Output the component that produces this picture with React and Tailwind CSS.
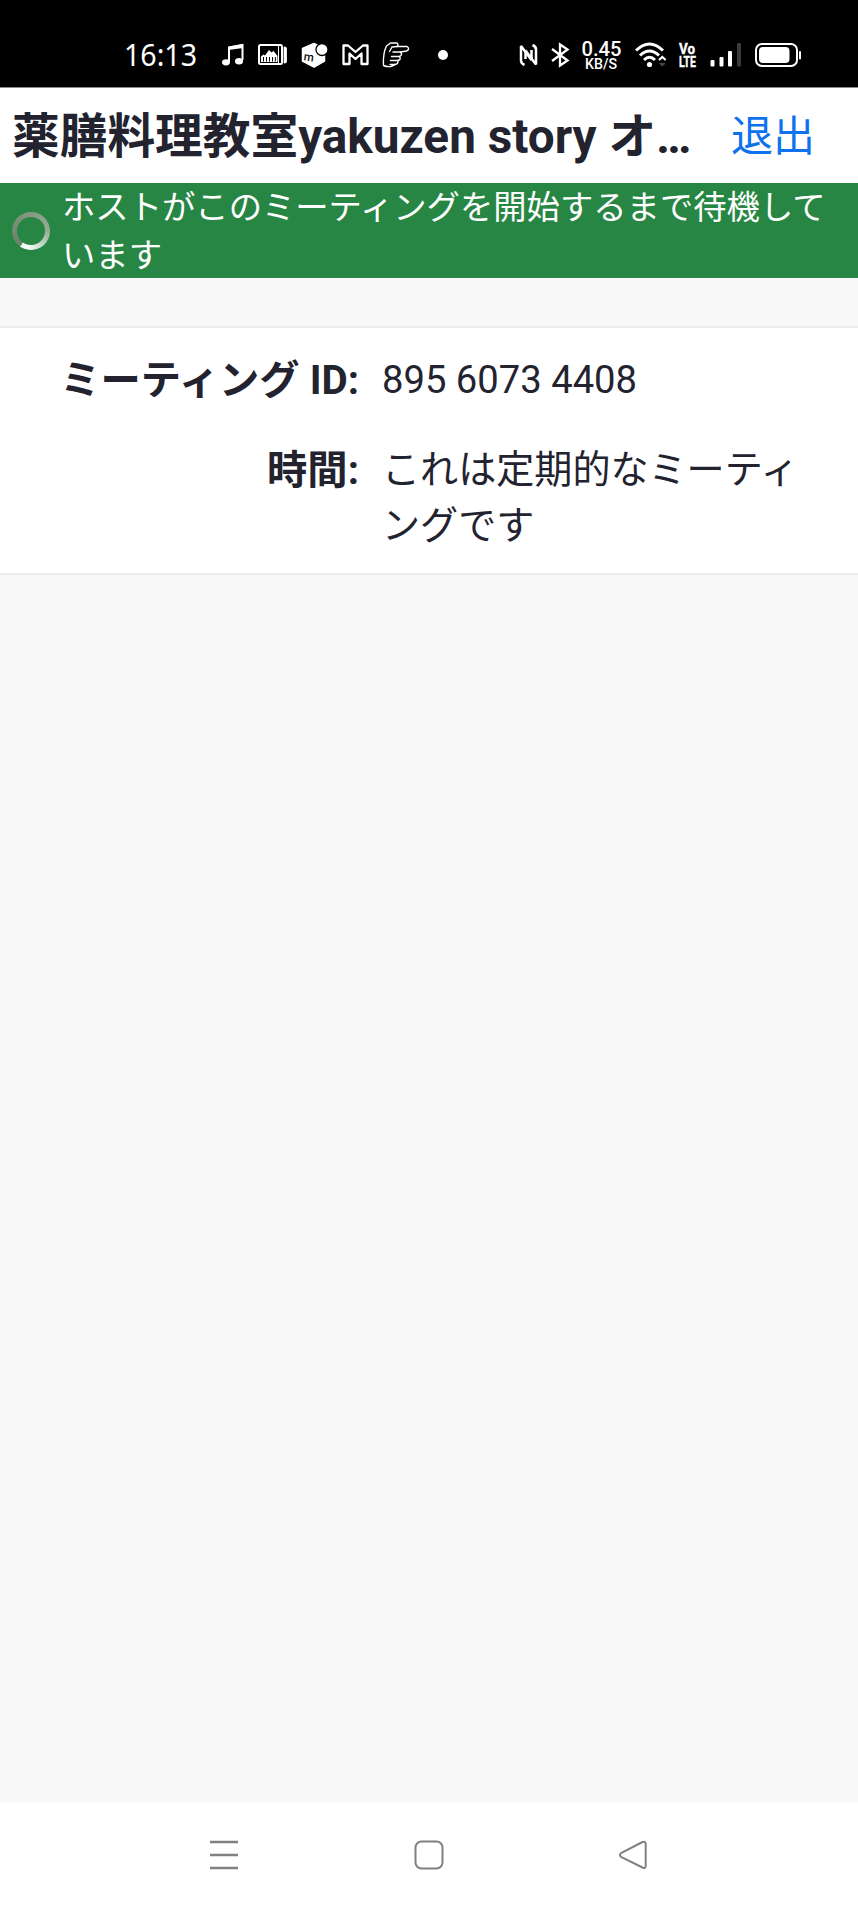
import React from "react";

function MusicIcon() {
  return (
    <svg className="ml-[24px] h-7 w-[23px]" viewBox="0 0 23 28">
      <path d="M8 20.5V6.5L21.5 4V19" fill="none" stroke="#fff" strokeWidth="2" />
      <path d="M7.5 5.5L22 3v4L7.5 9z" fill="#fff" />
      <ellipse cx="5" cy="21.3" rx="4" ry="3.1" fill="#fff" />
      <ellipse cx="18" cy="20.3" rx="4" ry="3.3" fill="#fff" />
    </svg>
  );
}

function GalleryIcon() {
  return (
    <svg className="ml-[14px] h-7 w-[30px]" viewBox="0 0 30 28" fill="none" stroke="#fff">
      <rect x="1" y="4" width="23" height="19" rx="1.5" strokeWidth="2" />
      <path d="M3 21V15.500l2.500-2 1.500 1 4-5.500 2.500 2.500 2-1.500 4 5V21z" fill="#fff" stroke="none" />
      <path d="M5.500 16v4.500M8.500 16v4.500M11.500 16v4.500M14.500 16v4.500M17.300 16v4.500" stroke="#000" strokeWidth="1" />
      <path d="M20.500 5v17" strokeWidth="1" />
      <path d="M26 6h1q1.5 0 1.5 1.5v13q0 1.5-1.500 1.500h-1z" fill="#fff" strokeWidth="0.8" />
    </svg>
  );
}

function ParcelIcon() {
  return (
    <svg className="ml-[13px] h-7 w-[28px]" viewBox="0 0 28 28">
      <path d="M13 2.500L23.500 7.500V20L13 26 1.500 20V7.500z" fill="#fff" stroke="#fff" strokeWidth="1.500" strokeLinejoin="round" />
      <circle cx="21" cy="8.500" r="6" fill="#fff" stroke="#000" strokeWidth="1.300" />
      <text x="2.500" y="20" fontSize="11.500" fontWeight="500" fontFamily="Inter, sans-serif" transform="rotate(8 7 18)">
        m
      </text>
    </svg>
  );
}

function MailIcon() {
  return (
    <svg className="ml-[13px] h-7 w-[27px]" viewBox="0 0 27 28">
      <path
        d="M1.500 4.500H6L13.500 11 21 4.500h4.500V23H19.500V12.500L13.500 18 7.500 12.500V23h-6z"
        fill="none"
        stroke="#fff"
        strokeWidth="2.300"
        strokeLinejoin="round"
      />
    </svg>
  );
}

function HandIcon() {
  return (
    <svg className="ml-[13px] h-7 w-[28px]" viewBox="0 0 28 28" fill="none" stroke="#fff" strokeWidth="1.400" strokeLinejoin="round" strokeLinecap="round">
      <path d="M1.500 24.500Q0.800 12 4.500 5L8.500 2H15Q17 3.500 15 5.500H25Q28.500 8 24.500 10L18.500 11Q21 14 17.500 15.500Q19.500 18.500 16 19.500Q16.500 23 13 23.500L9 25.500Q5 26 1.500 24.500Z" />
      <path d="M7.500 10.500L10 6l5-.5M11 11h7.500M9.500 15.500h8M8.500 19.500h7.500M8 23.500h5" />
    </svg>
  );
}

function NfcIcon() {
  return (
    <svg className="ml-[71px] h-7 w-[19px]" viewBox="0 0 19 28" fill="none" stroke="#fff" strokeWidth="2.500">
      <path d="M5.500 24Q2 22.500 2 19.500V5L12.500 19V9" strokeLinejoin="bevel" />
      <path d="M13.500 4Q17 5.500 17 8.500V23.500L6.500 9.500V18" strokeLinejoin="bevel" />
    </svg>
  );
}

function BluetoothIcon() {
  return (
    <svg className="ml-[13px] h-7 w-[19px]" viewBox="0 0 19 28" fill="none" stroke="#fff" strokeWidth="2.300">
      <path d="M1 8L16.500 19.500 9 24.500V3.500L16.500 8.500 1 20" />
    </svg>
  );
}

function NetworkSpeed() {
  return (
    <svg className="ml-[11px] h-[32px] w-[41px] overflow-visible" viewBox="0 0 41 32" fill="#fff" fontFamily="Roboto, sans-serif" fontWeight="500">
      <text x="0.500" y="17" fontSize="20" textLength="40" lengthAdjust="spacingAndGlyphs">0.45</text>
      <text x="4" y="29.500" fontSize="15" textLength="32" lengthAdjust="spacingAndGlyphs">KB/S</text>
    </svg>
  );
}

function WifiIcon() {
  return (
    <svg className="ml-[13px] h-7 w-[32px]" viewBox="0 0 32 28" fill="none" stroke="#fff">
      <path d="M1 9.500Q14.500-3.500 28 9.500" strokeWidth="3" />
      <path d="M5 14.500Q14.500 5.500 24 14.500" strokeWidth="3" />
      <path d="M9 19Q14.500 13.500 20 19" strokeWidth="3" />
      <circle cx="14.500" cy="23.500" r="2.600" fill="#fff" stroke="none" />
      <path d="M24 19L27.300 16 30.600 19" strokeWidth="2.200" />
      <path d="M24.500 22.500L27.300 25 30 22.500z" fill="#444" stroke="#444" />
    </svg>
  );
}

function VolteIcon() {
  return (
    <svg className="ml-[11px] h-7 w-[19px] overflow-visible" viewBox="0 0 19 28" fill="#fff" stroke="#fff" strokeWidth="0.400" fontFamily="Roboto, sans-serif" fontWeight="700">
      <text x="1" y="13" fontSize="15.500" textLength="16" lengthAdjust="spacingAndGlyphs">Vo</text>
      <text x="1" y="26" fontSize="15.500" textLength="17" lengthAdjust="spacingAndGlyphs">LTE</text>
    </svg>
  );
}

function SignalIcon() {
  return (
    <svg className="ml-[13px] h-7 w-[32px]" viewBox="0 0 32 28" fill="#fff">
      <rect x="0.500" y="19" width="4" height="6.500" rx="1" />
      <rect x="9.500" y="16" width="4" height="9.500" rx="1" />
      <rect x="18" y="10" width="4" height="15.500" rx="1" />
      <rect x="27" y="2" width="4" height="23.500" rx="1" fill="#3a3a3a" />
    </svg>
  );
}

function BatteryIcon() {
  return (
    <svg className="ml-[13px] h-7 w-[47px]" viewBox="0 0 47 28">
      <rect x="1" y="3" width="41" height="22" rx="6" fill="none" stroke="#fff" strokeWidth="2" />
      <rect x="4" y="6" width="30.500" height="16" rx="4" fill="#fff" />
      <rect x="44" y="10" width="2" height="8.500" rx="1" fill="#fff" />
    </svg>
  );
}

function StatusBar() {
  return (
    <header className="flex h-[87px] shrink-0 items-center bg-black pt-[23px] pl-[124px]">
      <svg className="h-8 w-[73px] overflow-visible" viewBox="0 0 73 32">
        <text x="0" y="26.500" fill="#fff" fontSize="30.500" fontFamily="Noto Sans, sans-serif" textLength="73" lengthAdjust="spacingAndGlyphs">16:13</text>
      </svg>
      <MusicIcon />
      <GalleryIcon />
      <ParcelIcon />
      <MailIcon />
      <HandIcon />
      <span className="ml-[28px] size-2.5 rounded-full bg-white" />
      <NfcIcon />
      <BluetoothIcon />
      <NetworkSpeed />
      <WifiIcon />
      <VolteIcon />
      <SignalIcon />
      <BatteryIcon />
    </header>
  );
}

function Spinner() {
  return (
    <span className="flex size-[38px] shrink-0 rounded-full bg-[conic-gradient(from_215deg,#68806a,#84957f_35%,#93ac93_65%,#c4dcc6_80%,#f4fbf5_92%,#f4fbf5)] p-[5px]">
      <span className="size-full rounded-full bg-[#278644]" />
    </span>
  );
}

function NavigationBar() {
  return (
    <nav className="flex h-[105px] shrink-0 items-center justify-between bg-white pr-[210px] pl-[209px]">
      <svg className="size-[30px]" viewBox="0 0 30 30" stroke="#808080" strokeWidth="2.600">
        <path d="M1 2h28M1 15h28M1 28h28" />
      </svg>
      <svg className="size-[30px]" viewBox="0 0 30 30" fill="none" stroke="#808080" strokeWidth="2">
        <rect x="1.500" y="1.500" width="27" height="27" rx="6" />
      </svg>
      <svg className="size-[30px]" viewBox="0 0 30 30" fill="none" stroke="#808080" strokeWidth="2" strokeLinejoin="round">
        <path d="M3 13.200L24.500 2Q27.700 1 27.700 4V26Q27.700 29 24.500 27.500L3 16.800Q1 15 3 13.200Z" />
      </svg>
    </nav>
  );
}

export default function App() {
  return (
    <div className="flex h-[1907px] w-[858px] flex-col bg-[#f9f9f9] font-['Roboto','Noto_Sans_CJK_JP',sans-serif] text-[#232330]">
      <StatusBar />

      <div className="flex h-24 shrink-0 items-center border-t border-[#8a8a8a] bg-white pt-[3px] pl-3">
        <h1 className="w-[686px] text-[47.700px] leading-[70px] font-bold whitespace-nowrap">
          薬膳料理教室yakuzen story オ…
        </h1>
        <button className="ml-[33px] text-[42px] leading-[60px] text-[#0e72ed]">退出</button>
      </div>

      <div className="flex h-[95px] shrink-0 items-center bg-[#278644] pl-3">
        <Spinner />
        <p className="ml-[12px] w-[780px] pt-[3px] text-[33.350px] leading-[48px] text-white">
          ホストがこのミーティングを開始するまで待機しています
        </p>
      </div>

      <dl className="mt-12 grid h-[249px] shrink-0 grid-cols-[359px_425px] content-start gap-x-[23px] border-y-2 border-[#ececec] bg-white pt-[23px]">
        <dt className="text-right text-[40.300px] leading-[60px] font-bold">ミーティング ID:</dt>
        <dd className="-mt-px text-[38.200px] leading-[60px]">895 6073 4408</dd>
        <dt className="pt-[30px] text-right text-[40.300px] leading-[60px] font-bold">時間:</dt>
        <dd className="pt-[31px] text-[38.100px] leading-[56px]">これは定期的なミーティングです</dd>
      </dl>

      <main className="flex-1" />
      <NavigationBar />
    </div>
  );
}
